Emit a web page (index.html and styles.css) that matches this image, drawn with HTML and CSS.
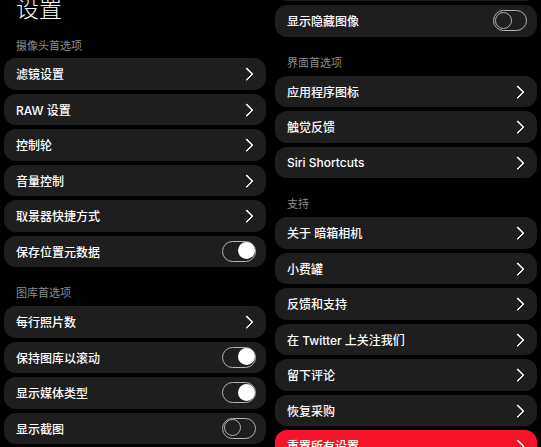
FILE: index.html
```html
<!DOCTYPE html>
<html lang="zh-CN">
<head>
    <meta charset="UTF-8">
    <meta name="viewport" content="width=device-width, initial-scale=1.0">
    <title>设置</title>
    <link rel="stylesheet" href="styles.css">
</head>
<body>
    <div class="page">

        <div class="column left">
            <h1 class="title">设置</h1>

            <div class="section-label first">摄像头首选项</div>
            <div class="list">
                <div class="row"><span>滤镜设置</span><i class="chevron"></i></div>
                <div class="row"><span>RAW 设置</span><i class="chevron"></i></div>
                <div class="row"><span>控制轮</span><i class="chevron"></i></div>
                <div class="row"><span>音量控制</span><i class="chevron"></i></div>
                <div class="row"><span>取景器快捷方式</span><i class="chevron"></i></div>
                <div class="row"><span>保存位置元数据</span><i class="toggle on"></i></div>
            </div>

            <div class="section-label">图库首选项</div>
            <div class="list">
                <div class="row"><span>每行照片数</span><i class="chevron"></i></div>
                <div class="row"><span>保持图库以滚动</span><i class="toggle on"></i></div>
                <div class="row"><span>显示媒体类型</span><i class="toggle on"></i></div>
                <div class="row"><span>显示截图</span><i class="toggle"></i></div>
            </div>
        </div>

        <div class="column right">
            <div class="list">
                <div class="row"></div>
                <div class="row"><span>显示隐藏图像</span><i class="toggle"></i></div>
            </div>

            <div class="section-label">界面首选项</div>
            <div class="list">
                <div class="row"><span>应用程序图标</span><i class="chevron"></i></div>
                <div class="row"><span>触觉反馈</span><i class="chevron"></i></div>
                <div class="row"><span>Siri Shortcuts</span><i class="chevron"></i></div>
            </div>

            <div class="section-label">支持</div>
            <div class="list">
                <div class="row"><span>关于 暗箱相机</span><i class="chevron"></i></div>
                <div class="row"><span>小费罐</span><i class="chevron"></i></div>
                <div class="row"><span>反馈和支持</span><i class="chevron"></i></div>
                <div class="row"><span>在 Twitter 上关注我们</span><i class="chevron"></i></div>
                <div class="row"><span>留下评论</span><i class="chevron"></i></div>
                <div class="row"><span>恢复采购</span><i class="chevron"></i></div>
                <div class="row danger"><span>重置所有设置</span><i class="chevron"></i></div>
            </div>
        </div>

    </div>
</body>
</html>
```

FILE: styles.css
```css
body {
    margin: 0;
    background: #000;
    color: #fff;
    font-family: "Inter", "Noto Sans CJK SC", sans-serif;
    overflow: hidden;
}
.page {
    display: grid;
    grid-template-columns: 262px 262px;
    column-gap: 9px;
    padding: 0 4px;
    height: 447px;
    overflow: hidden;
}
.column.left {
    margin-top: -7px;
}
.column.right {
    margin-top: -30.5px;
}
.title {
    margin: 0;
    padding-left: 12px;
    font-size: 23px;
    font-weight: 300;
    line-height: 28px;
    font-family: "Noto Sans CJK SC", sans-serif;
}
.section-label {
    padding: 18px 0 6px 12px;
    font-size: 11px;
    line-height: 15px;
    color: #8b8b8e;
    font-family: "Noto Sans CJK SC", sans-serif;
}
.section-label.first {
    padding-top: 17px;
    padding-bottom: 5px;
}
.list {
    display: flex;
    flex-direction: column;
    gap: 4px;
}
.row {
    height: 31.5px;
    flex-shrink: 0;
    display: flex;
    align-items: center;
    justify-content: space-between;
    padding: 0 10px 0 12px;
    background: #1e1e1f;
    border-radius: 12px;
    font-size: 12px;
    font-weight: 500;
}
.row.danger {
    background: #f5142a;
}
.chevron {
    width: 7.5px;
    height: 7.5px;
    margin-right: 5px;
    border-top: 2px solid #ececec;
    border-right: 2px solid #ececec;
    border-radius: 1px;
    transform: rotate(45deg);
}
.toggle {
    position: relative;
    box-sizing: border-box;
    width: 34px;
    height: 21px;
    border: 1.5px solid #b4b4b4;
    border-radius: 11px;
    background: #1e1e1f;
}
.toggle::after {
    content: "";
    position: absolute;
    top: 0.5px;
    left: 0.5px;
    box-sizing: border-box;
    width: 17px;
    height: 17px;
    border-radius: 50%;
    border: 1.5px solid #b4b4b4;
    background: #1e1e1f;
}
.toggle.on::after {
    left: auto;
    right: 0.5px;
    border: none;
    background: #fff;
}
```
